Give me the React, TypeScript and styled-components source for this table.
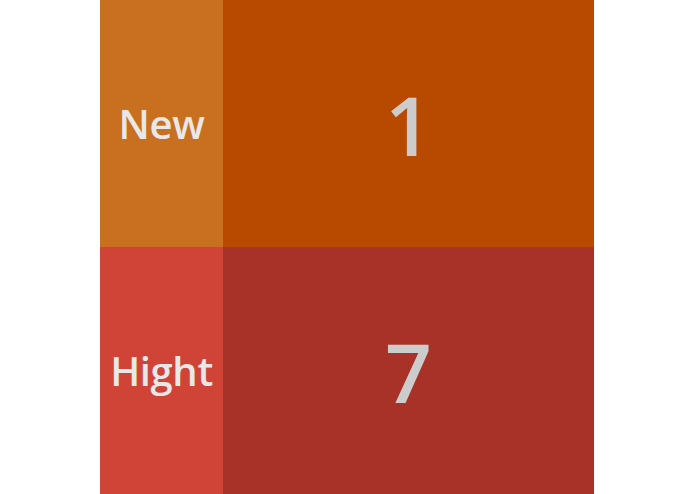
import React from "react";
import styled, { createGlobalStyle } from "styled-components";

const Global = createGlobalStyle`
  html, body { margin: 0; padding: 0; background: #ffffff; }
  body { font-family: "Open Sans", "Noto Sans", sans-serif; }
`;

const Page = styled.div`
  display: flex;
  padding-left: 100px;
  width: 695px;
  height: 494px;
  box-sizing: border-box;
`;

const Board = styled.div`
  display: grid;
  grid-template-columns: 123px 371px;
  grid-template-rows: 247px 247px;
  width: 494px;
  height: 494px;
`;

const LabelCell = styled.div<{ $bg: string }>`
  display: flex;
  align-items: center;
  justify-content: center;
  background: ${(p) => p.$bg};
  color: #e8e8e8;
  font-size: 40px;
  font-weight: 650;
  letter-spacing: -0.4px;
`;

const CountCell = styled.div<{ $bg: string }>`
  display: flex;
  align-items: center;
  justify-content: center;
  background: ${(p) => p.$bg};
  color: #cccccc;
  font-size: 82px;
  font-weight: 650;
`;

const rows = [
  { label: "New", count: 1, labelBg: "#c97020", countBg: "#b84a00" },
  { label: "Hight", count: 7, labelBg: "#d04437", countBg: "#a83227" },
];

export default function App() {
  return (
    <>
      <Global />
      <Page>
        <Board>
          {rows.map((r) => (
            <React.Fragment key={r.label}>
              <LabelCell $bg={r.labelBg}>{r.label}</LabelCell>
              <CountCell $bg={r.countBg}>{r.count}</CountCell>
            </React.Fragment>
          ))}
        </Board>
      </Page>
    </>
  );
}
